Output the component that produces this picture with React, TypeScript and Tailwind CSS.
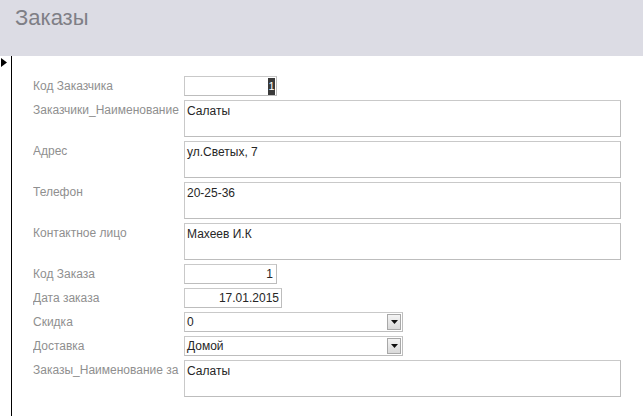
const font = { fontFamily: '"Liberation Sans", Arial, sans-serif' };

type Row = {
  label: string;
  value: string;
  kind: "short" | "tall" | "combo" | "num" | "date" | "cursor";
};

const rows: Row[] = [
  { label: "Код Заказчика", value: "1", kind: "cursor" },
  { label: "Заказчики_Наименование", value: "Салаты", kind: "tall" },
  { label: "Адрес", value: "ул.Светых, 7", kind: "tall" },
  { label: "Телефон", value: "20-25-36", kind: "tall" },
  { label: "Контактное лицо", value: "Махеев И.К", kind: "tall" },
  { label: "Код Заказа", value: "1", kind: "num" },
  { label: "Дата заказа", value: "17.01.2015", kind: "date" },
  { label: "Скидка", value: "0", kind: "combo" },
  { label: "Доставка", value: "Домой", kind: "combo" },
  { label: "Заказы_Наименование за", value: "Салаты", kind: "tall" },
];

const Field = ({ row }: { row: Row }) => {
  const box = "border border-[#c9c9c9] border-r-[#bdbdbd] border-b-[#bdbdbd] bg-white text-[12px] text-[#262626]";
  if (row.kind === "tall")
    return (
      <div className={`${box} w-[437px] h-[37px] px-[2px] pt-[3px] leading-[15px]`}>{row.value}</div>
    );
  if (row.kind === "cursor")
    return (
      <div className={`${box} w-[93px] h-[20px] flex justify-end items-center pr-[1px]`}>
        <span className="bg-[#3a3a3a] text-white text-[11px] h-[17px] w-[7px] flex items-center justify-center leading-none">1</span>
      </div>
    );
  if (row.kind === "num")
    return (
      <div className={`${box} w-[93px] h-[20px] flex justify-end items-center pr-[3px]`}>{row.value}</div>
    );
  if (row.kind === "date")
    return (
      <div className={`${box} w-[98px] h-[20px] flex justify-end items-center pr-[2px]`}>{row.value}</div>
    );
  return (
    <div className={`${box} w-[219px] h-[20px] flex items-center`}>
      <span className="flex-1 pl-[2px]">{row.value}</span>
      <span className="w-[14px] h-[16px] mr-[1px] border border-[#a8a8a8] bg-gradient-to-b from-[#f4f4f4] to-[#d9d9d9] flex items-center justify-center">
        <svg width="7" height="4" viewBox="0 0 7 4">
          <path d="M0 0H7L3.5 4Z" fill="#111" />
        </svg>
      </span>
    </div>
  );
};

export default function App() {
  return (
    <div className="w-[643px] h-[416px] bg-white overflow-hidden" style={font}>
      <div className="h-[56px] bg-[#dcdce4] pl-[15px] pt-[3px]">
        <span className="text-[22px] text-[#7f7f86] leading-[30px]">Заказы</span>
      </div>
      <div className="flex h-[360px]">
        <div className="w-[12px] border-r border-black relative">
          <svg className="absolute left-[1px] top-[2px]" width="6" height="9" viewBox="0 0 6 9">
            <path d="M0 0L6 4.5L0 9Z" fill="#000" />
          </svg>
        </div>
        <div className="flex flex-col gap-[4px] pt-[20px] pl-[21px]">
          {rows.map((r) => (
            <div key={r.label} className="flex">
              <div className="w-[151px] pr-[4px] text-[12px] text-[#8f8f8f] leading-[20px] whitespace-nowrap overflow-hidden">
                {r.label}
              </div>
              <Field row={r} />
            </div>
          ))}
        </div>
      </div>
    </div>
  );
}
